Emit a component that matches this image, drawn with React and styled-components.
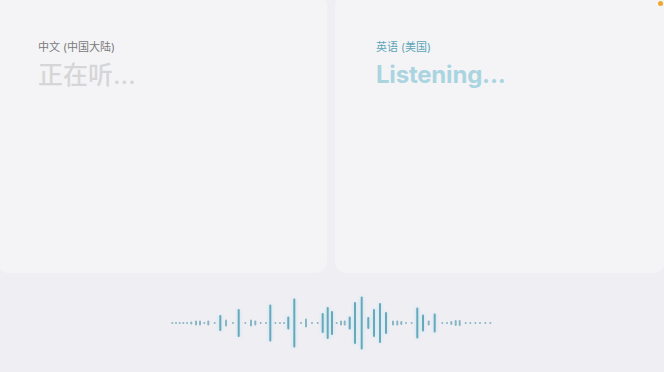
import React from "react";
import styled, { createGlobalStyle } from "styled-components";

const Global = createGlobalStyle`
  html, body { margin: 0; padding: 0; background: #efeef3; overflow: hidden; }
  #root { width: 664px; height: 372px; }
`;

const Screen = styled.div`
  position: relative;
  width: 664px;
  height: 372px;
  display: flex;
  flex-direction: column;
  overflow: hidden;
  background: #efeef3;
  font-family: Inter, "Noto Sans CJK SC", sans-serif;
`;

const CardsRow = styled.div`
  display: flex;
  gap: 8px;
  margin: -6px -1px 0 -3px;
  height: 279px;
  flex: none;
`;

const Card = styled.section`
  flex: 1;
  background: #f4f4f6;
  border-radius: 12px;
  padding: 46px 41px 0 41px;
  display: flex;
  flex-direction: column;
`;

const Label = styled.div`
  font-size: 11px;
  line-height: 14px;
  font-family: Inter, "Noto Sans CJK SC", sans-serif;
  color: ${(p) => p.$color};
`;

const Heading = styled.div`
  margin-top: 4px;
  font-size: ${(p) => p.$size}px;
  line-height: 34px;
  font-weight: ${(p) => p.$weight};
  color: ${(p) => p.$color};
  font-family: Inter, "Noto Sans CJK SC", sans-serif;
  letter-spacing: ${(p) => p.$spacing || 0}px;
`;

const WaveArea = styled.div`
  flex: 1;
  display: flex;
  align-items: center;
  justify-content: center;
`;

const WaveSvg = styled.svg`
  display: block;
  width: 328px;
  height: 60px;
  overflow: visible;
`;

const StatusDot = styled.span`
  position: absolute;
  top: 1px;
  right: 1px;
  width: 5px;
  height: 5px;
  border-radius: 50%;
  background: #efa72f;
`;

const bars = [
  [172.3, 2], [176, 2], [179.7, 2], [183.3, 2], [187, 2], [191.3, 3], [196, 5], [200, 5],
  [204.3, 2], [208.3, 5], [214.7, 2], [220.3, 16],
  [226, 7], [233, 2], [238.7, 28], [245.3, 2], [251, 7], [255.3, 5], [260.7, 2], [266, 2],
  [270.3, 37], [275.3, 2],
  [280, 2], [284, 2], [288.3, 13], [294.3, 49], [301, 2], [306, 9], [312, 2], [317.7, 2],
  [322.7, 20], [327.7, 32], [332, 24],
  [336.7, 2], [341, 5], [344.7, 5], [349.7, 13], [355, 42], [361.7, 53], [368.3, 12],
  [374, 28], [380, 40], [386, 22],
  [393, 5], [397.3, 5], [401.3, 4], [406, 2], [411.7, 2], [417.3, 31], [423, 17], [428.7, 5],
  [434.7, 19],
  [442.3, 2], [447, 2], [451.3, 4], [455.7, 6], [459.7, 6], [465.7, 2], [470.3, 2], [475.3, 2],
  [480, 2], [485.3, 2], [490.3, 2],
];

function Waveform() {
  return (
    <WaveSvg viewBox="168 0 328 60">
      <defs>
        <filter id="glow" x="-200%" y="-20%" width="500%" height="140%">
          <feGaussianBlur stdDeviation="1.4" />
        </filter>
      </defs>
      <g filter="url(#glow)" opacity="0.55">
        {bars
          .filter(([, h]) => h > 10)
          .map(([x, h], i) => (
            <rect key={i} x={x - 2} y={30 - h / 2} width={4} height={h} fill="#bfe6f2" />
          ))}
      </g>
      {bars.map(([x, h], i) => (
        <rect
          key={i}
          x={x - 1}
          y={30 - h / 2}
          width={2}
          height={h}
          rx={1}
          fill={h > 10 ? "#67a9bb" : "#86b5c4"}
        />
      ))}
    </WaveSvg>
  );
}

export default function App() {
  return (
    <Screen>
      <Global />
      <CardsRow>
        <Card>
          <Label $color="#7a7a7c">中文 (中国大陆)</Label>
          <Heading $size={25} $weight={500} $color="#d6d6d8">
            正在听...
          </Heading>
        </Card>
        <Card>
          <Label $color="#5da5b8">英语 (美国)</Label>
          <Heading $size={24} $weight={700} $color="#abd4e1" $spacing={-0.2}>
            Listening...
          </Heading>
        </Card>
      </CardsRow>
      <WaveArea>
        <Waveform />
      </WaveArea>
      <StatusDot />
    </Screen>
  );
}
